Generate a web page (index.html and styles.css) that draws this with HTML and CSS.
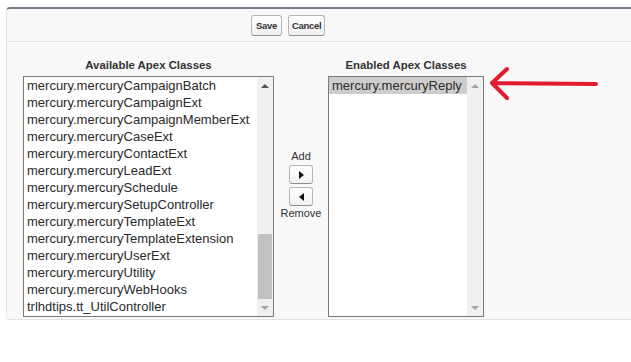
FILE: index.html
```html
<!DOCTYPE html>
<html lang="en">
<head>
  <meta charset="UTF-8" />
  <title>Apex Class Access</title>
  <meta name="viewport" content="width=device-width, initial-scale=1.0" />
  <link rel="stylesheet" href="styles.css">
</head>
<body>
  <div class="page">
    <div class="block">
      <div class="btn-row">
        <button class="btn">Save</button>
        <button class="btn">Cancel</button>
      </div>

      <div class="section">
        <div class="col col-left">
          <div class="col-title">Available Apex Classes</div>
          <div class="listbox listbox-left">
            <div class="list">
              <div class="item">mercury.mercuryCampaignBatch</div>
              <div class="item">mercury.mercuryCampaignExt</div>
              <div class="item">mercury.mercuryCampaignMemberExt</div>
              <div class="item">mercury.mercuryCaseExt</div>
              <div class="item">mercury.mercuryContactExt</div>
              <div class="item">mercury.mercuryLeadExt</div>
              <div class="item">mercury.mercurySchedule</div>
              <div class="item">mercury.mercurySetupController</div>
              <div class="item">mercury.mercuryTemplateExt</div>
              <div class="item">mercury.mercuryTemplateExtension</div>
              <div class="item">mercury.mercuryUserExt</div>
              <div class="item">mercury.mercuryUtility</div>
              <div class="item">mercury.mercuryWebHooks</div>
              <div class="item">trlhdtips.tt_UtilController</div>
            </div>
            <div class="scrollbar">
              <div class="sb-arrow"><span class="tri-up active"></span></div>
              <div class="sb-space"></div>
              <div class="sb-thumb"></div>
              <div class="sb-arrow"><span class="tri-down"></span></div>
            </div>
          </div>
        </div>

        <div class="col col-mid">
          <div class="mid-label">Add</div>
          <button class="arrow-btn"><span class="tri-right"></span></button>
          <button class="arrow-btn"><span class="tri-left"></span></button>
          <div class="mid-label">Remove</div>
        </div>

        <div class="col col-right">
          <div class="col-title">Enabled Apex Classes</div>
          <div class="listbox listbox-right">
            <div class="list">
              <div class="item selected">mercury.mercuryReply</div>
            </div>
            <div class="scrollbar">
              <div class="sb-arrow"><span class="tri-up"></span></div>
              <div class="sb-space"></div>
              <div class="sb-arrow"><span class="tri-down"></span></div>
            </div>
          </div>
        </div>
      </div>
    </div>

    <svg class="callout" width="120" height="44" viewBox="0 0 120 44">
      <path d="M7 21 L111 22 M22 7 L7 21 L22 36" fill="none" stroke="#e31b2f" stroke-width="4" stroke-linecap="round" stroke-linejoin="round"/>
    </svg>
  </div>
</body>
</html>
```

FILE: styles.css
```css
body {
  margin: 0;
  background: #fff;
  font-family: 'Liberation Sans', Arial, sans-serif;
  color: #222;
}
.page {
  position: relative;
  padding: 7px 0 0 6px;
}
.block {
  background: #f8f8f8;
  border-top: 2px solid #737d8b;
  border-left: 1px solid #e4e4e4;
  border-bottom: 1px solid #e2e2e2;
  border-radius: 4px 0 0 4px;
  padding-bottom: 2px;
}
.btn-row {
  display: flex;
  gap: 6px;
  padding: 6px 0 5px 244px;
  border-bottom: 1px solid #e0e0e0;
}
.btn {
  height: 21px;
  min-width: 31px;
  padding: 0 3px;
  font-family: 'Liberation Sans', Arial, sans-serif;
  font-size: 9.5px;
  font-weight: bold;
  letter-spacing: -0.3px;
  color: #333;
  background: linear-gradient(#ffffff, #f1f1f1);
  border: 1px solid #b5b5b5;
  border-bottom-color: #8f8f8f;
  border-radius: 3px;
}
.section {
  display: flex;
  padding: 17px 0 0 16px;
}
.col-title {
  font-size: 11.4px;
  font-weight: bold;
  line-height: 13px;
  color: #333;
  text-align: center;
  margin-bottom: 4px;
}
.col-left {
  width: 251px;
}
.col-mid {
  width: 54px;
  padding-top: 91px;
  display: flex;
  flex-direction: column;
  align-items: center;
}
.col-right {
  width: 156px;
}
.listbox {
  display: flex;
  height: 241px;
  box-sizing: border-box;
  background: #fff;
  border: 1px solid #7a7a7a;
  overflow: hidden;
}
.list {
  flex: 1;
  overflow: hidden;
}
.item {
  font-size: 13px;
  line-height: 17px;
  padding-left: 3px;
  white-space: nowrap;
  color: #2a2a2a;
}
.item.selected {
  background: #cdcdcd;
}
.scrollbar {
  width: 16px;
  background: #f0f0f0;
  display: flex;
  flex-direction: column;
}
.sb-arrow {
  height: 17px;
  display: flex;
  align-items: center;
  justify-content: center;
}
.sb-space {
  flex: 1;
}
.sb-thumb {
  height: 65px;
  margin: 0 1px;
  background: #c1c1c1;
}
.tri-up, .tri-down {
  width: 0;
  height: 0;
  border-left: 4px solid transparent;
  border-right: 4px solid transparent;
}
.tri-up {
  border-bottom: 4px solid #a3a3a3;
}
.tri-up.active {
  border-bottom-color: #505050;
}
.tri-down {
  border-top: 4px solid #a3a3a3;
}
.mid-label {
  font-size: 11px;
  line-height: 13px;
  color: #333;
}
.arrow-btn {
  width: 24px;
  height: 19px;
  margin: 2px 0 1px;
  padding: 0;
  display: flex;
  align-items: center;
  justify-content: center;
  background: linear-gradient(#ffffff, #f1f1f1);
  border: 1px solid #b5b5b5;
  border-bottom-color: #8f8f8f;
  border-radius: 3px;
}
.tri-right, .tri-left {
  width: 0;
  height: 0;
  border-top: 4px solid transparent;
  border-bottom: 4px solid transparent;
}
.tri-right {
  border-left: 5px solid #111;
}
.tri-left {
  border-right: 5px solid #111;
}
.callout {
  position: absolute;
  left: 485px;
  top: 62px;
}
```
